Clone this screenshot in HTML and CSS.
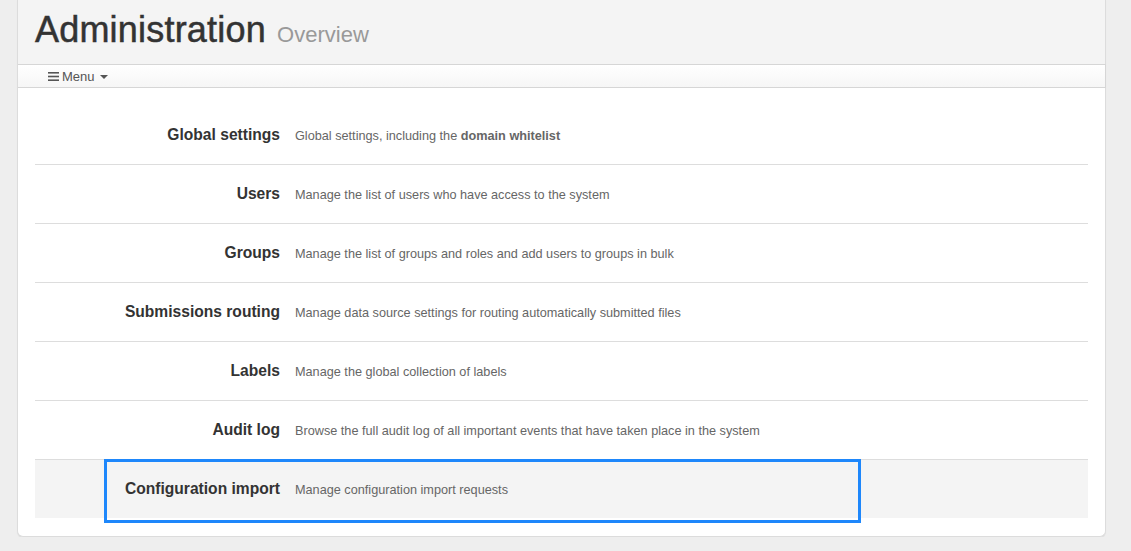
FILE: index.html
```html
<!DOCTYPE html>
<html>
<head>
<meta charset="utf-8">
<title>Administration</title>
<link rel="stylesheet" href="styles.css">
</head>
<body>
<div class="card">
  <header class="page-header">
    <h1>Administration <small>Overview</small></h1>
  </header>
  <nav class="menubar">
    <a class="menu-toggle" href="#">
      <svg class="hamburger" width="11" height="9" viewBox="0 0 11 9"><rect x="0" y="0" width="11" height="1.6" fill="#555"/><rect x="0" y="3.7" width="11" height="1.6" fill="#555"/><rect x="0" y="7.4" width="11" height="1.6" fill="#555"/></svg>
      <span>Menu</span>
      <span class="caret"></span>
    </a>
  </nav>
  <div class="content">
    <div class="row">
      <div class="label">Global settings</div>
      <div class="desc">Global settings, including the <b>domain whitelist</b></div>
    </div>
    <div class="row">
      <div class="label">Users</div>
      <div class="desc">Manage the list of users who have access to the system</div>
    </div>
    <div class="row">
      <div class="label">Groups</div>
      <div class="desc">Manage the list of groups and roles and add users to groups in bulk</div>
    </div>
    <div class="row">
      <div class="label">Submissions routing</div>
      <div class="desc">Manage data source settings for routing automatically submitted files</div>
    </div>
    <div class="row">
      <div class="label">Labels</div>
      <div class="desc">Manage the global collection of labels</div>
    </div>
    <div class="row">
      <div class="label">Audit log</div>
      <div class="desc">Browse the full audit log of all important events that have taken place in the system</div>
    </div>
    <div class="row active">
      <div class="label">Configuration import</div>
      <div class="desc">Manage configuration import requests</div>
      <div class="focus-ring"></div>
    </div>
  </div>
</div>
</body>
</html>
```

FILE: styles.css
```css
html, body {
  margin: 0;
  padding: 0;
  background: #eeeeee;
  font-family: "Liberation Sans", Arial, Helvetica, sans-serif;
  color: #333;
}

.card {
  margin-left: 17px;
  width: 1087px;
  background: #fff;
  border: 1px solid #dcdcdc;
  border-top: none;
  border-radius: 0 0 6px 6px;
  box-shadow: 0 1px 1px rgba(0,0,0,0.06);
  padding-bottom: 18px;
}

.page-header {
  background: #f4f4f4;
  height: 64px;
  box-sizing: border-box;
  padding: 10px 0 0 17px;
}

.page-header h1 {
  margin: 0;
  font-size: 36px;
  line-height: 40px;
  font-weight: normal;
  color: #333;
  letter-spacing: 0.2px;
  -webkit-text-stroke: 0.5px #333;
}

.page-header h1 small {
  font-size: 22px;
  color: #999;
  margin-left: 1px;
  letter-spacing: 0;
  -webkit-text-stroke: 0;
}

.menubar {
  height: 24px;
  box-sizing: border-box;
  border-top: 1px solid #d6d6d6;
  border-bottom: 1px solid #d6d6d6;
  border-right: 1px solid #d6d6d6;
  margin-right: -1px;
  background: linear-gradient(#ffffff, #f6f6f6);
  display: flex;
  align-items: center;
  padding-left: 30px;
}

.menu-toggle {
  display: flex;
  align-items: center;
  color: #555;
  text-decoration: none;
  font-size: 13px;
}

.hamburger {
  margin-right: 3px;
}

.caret {
  display: inline-block;
  width: 0;
  height: 0;
  border-left: 4px solid transparent;
  border-right: 4px solid transparent;
  border-top: 4px solid #555;
  margin-left: 5px;
  margin-top: 1px;
}

.content {
  margin: 18px 17px 0 17px;
}

.row {
  display: flex;
  align-items: baseline;
  height: 18px;
  padding: 20px 0;
  line-height: 18px;
  border-top: 1px solid #dddddd;
  position: relative;
}

.row:first-child {
  border-top: none;
}

.row.active {
  background: #f4f4f4;
}

.label {
  width: 245px;
  flex: none;
  text-align: right;
  font-weight: bold;
  font-size: 15.6px;
  color: #333;
}

.desc {
  margin-left: 15px;
  font-size: 12.7px;
  color: #666;
}

.desc b {
  color: #666;
}

.focus-ring {
  position: absolute;
  left: 69px;
  top: -1px;
  width: 757px;
  height: 64px;
  box-sizing: border-box;
  border: 3px solid #1e87fb;
  pointer-events: none;
}
```
